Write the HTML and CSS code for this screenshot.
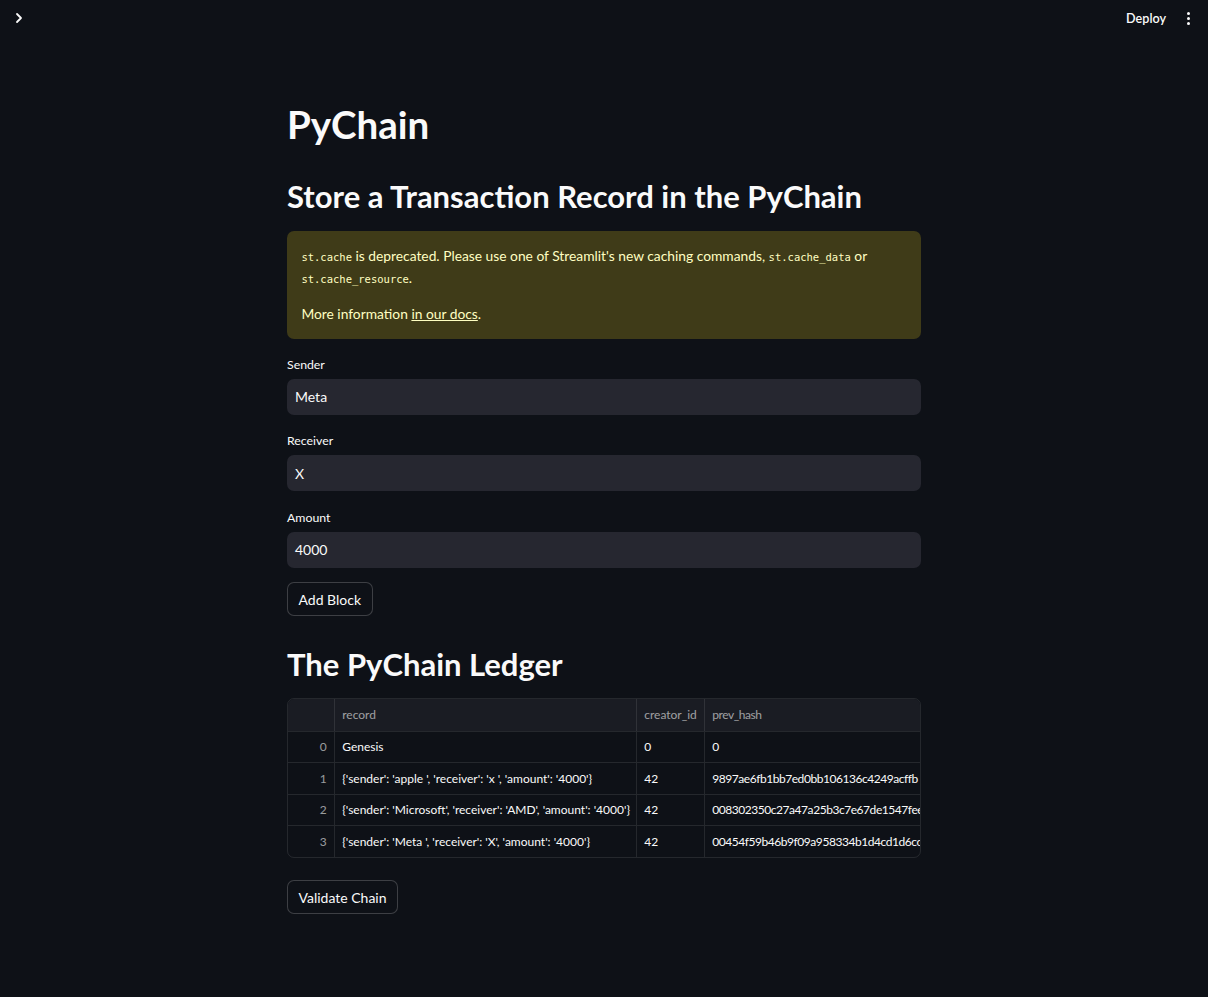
FILE: index.html
```html
<!DOCTYPE html>
<html lang="en">
<head>
<meta charset="utf-8">
<title>PyChain</title>
<link rel="stylesheet" href="styles.css">
</head>
<body>
<header class="topbar">
  <button class="sidebar-toggle" aria-label="Open sidebar">
    <svg width="10" height="12" viewBox="0 0 10 12"><path d="M3 2 L7 6 L3 10" fill="none" stroke="#fafafa" stroke-width="1.8" stroke-linecap="round" stroke-linejoin="round"/></svg>
  </button>
  <div class="toolbar">
    <span class="deploy">Deploy</span>
    <span class="kebab" aria-label="Main menu"><i></i><i></i><i></i></span>
  </div>
</header>
<main class="container">
  <h1 class="title">PyChain</h1>
  <h2 class="subtitle">Store a Transaction Record in the PyChain</h2>
  <div class="alert">
    <p><code>st.cache</code> is deprecated. Please use one of Streamlit's new caching commands, <code>st.cache_data</code> or <code>st.cache_resource</code>.</p>
    <p>More information <a href="#">in our docs</a>.</p>
  </div>
  <div class="field">
    <label class="field-label">Sender</label>
    <div class="input">Meta</div>
  </div>
  <div class="field">
    <label class="field-label">Receiver</label>
    <div class="input">X</div>
  </div>
  <div class="field">
    <label class="field-label">Amount</label>
    <div class="input">4000</div>
  </div>
  <div class="btn-row"><button class="btn">Add Block</button></div>
  <h2 class="subtitle ledger">The PyChain Ledger</h2>
  <div class="grid-wrap">
    <div class="grid">
      <div class="row head">
        <div class="cell idx"></div>
        <div class="cell rec">record</div>
        <div class="cell cid">creator_id</div>
        <div class="cell hash">prev_hash</div>
      </div>
      <div class="row">
        <div class="cell idx">0</div>
        <div class="cell rec">Genesis</div>
        <div class="cell cid">0</div>
        <div class="cell hash">0</div>
      </div>
      <div class="row">
        <div class="cell idx">1</div>
        <div class="cell rec">{'sender': 'apple ', 'receiver': 'x ', 'amount': '4000'}</div>
        <div class="cell cid">42</div>
        <div class="cell hash">9897ae6fb1bb7ed0bb106136c4249acffb</div>
      </div>
      <div class="row">
        <div class="cell idx">2</div>
        <div class="cell rec">{'sender': 'Microsoft', 'receiver': 'AMD', 'amount': '4000'}</div>
        <div class="cell cid">42</div>
        <div class="cell hash">008302350c27a47a25b3c7e67de1547fee</div>
      </div>
      <div class="row">
        <div class="cell idx">3</div>
        <div class="cell rec">{'sender': 'Meta ', 'receiver': 'X', 'amount': '4000'}</div>
        <div class="cell cid">42</div>
        <div class="cell hash">00454f59b46b9f09a958334b1d4cd1d6cc</div>
      </div>
    </div>
  </div>
  <div class="btn-row validate"><button class="btn">Validate Chain</button></div>
</main>
</body>
</html>
```

FILE: styles.css
```css
* { box-sizing: border-box; }
html, body {
  margin: 0;
  padding: 0;
  background: #0e1117;
  color: #fafafa;
  font-family: Lato, "Noto Sans", sans-serif;
}
body { min-height: 997px; }

.topbar {
  height: 36px;
  display: flex;
  align-items: center;
  justify-content: space-between;
  padding: 0 12px 0 10px;
}
.sidebar-toggle {
  background: none;
  border: none;
  padding: 0;
  width: 14px;
  height: 14px;
  display: flex;
  align-items: center;
  justify-content: center;
  margin-left: 2px;
}
.toolbar {
  display: flex;
  align-items: center;
}
.deploy {
  font-size: 12.6px;
  font-weight: 600;
  color: #fafafa;
  margin-right: 21px;
}
.kebab {
  display: flex;
  flex-direction: column;
  gap: 2px;
  margin-right: 6px;
}
.kebab i {
  display: block;
  width: 3px;
  height: 3px;
  border-radius: 50%;
  background: #fafafa;
}

.container {
  width: 634px;
  margin: 0 auto;
  padding-top: 47px;
  padding-bottom: 60px;
}

.title {
  margin: 0;
  padding: 18px 0 14.4px;
  font-size: 38.5px;
  line-height: 47.5px;
  font-weight: 700;
}
.subtitle {
  margin: 0;
  padding: 14.4px 0;
  font-size: 31px;
  line-height: 38.9px;
  font-weight: 700;
}
.ledger { margin-top: 14.4px; }

.alert {
  background: #3f3b18;
  color: #ffffc2;
  border-radius: 7px;
  padding: 14.4px;
  font-size: 13.8px;
  line-height: 21.6px;
}
.alert p { margin: 0; }
.alert p + p { margin-top: 14.4px; }
.alert code {
  font-family: "DejaVu Sans Mono", "Liberation Mono", monospace;
  font-size: 10.5px;
  line-height: 0;
}
.alert a { color: #ffffc2; text-decoration: underline; }

.field { margin-top: 15.2px; }
.field-label {
  display: flex;
  align-items: center;
  height: 21.6px;
  margin-bottom: 3.6px;
  font-size: 12.3px;
  color: #fafafa;
}
.input {
  height: 36px;
  background: #262730;
  border-radius: 7px;
  display: flex;
  align-items: center;
  padding-left: 8px;
  font-size: 14px;
  color: #fafafa;
}

.btn-row { margin-top: 14.4px; }
.btn {
  height: 34px;
  padding: 0 10.5px;
  background: #0e1117;
  border: 1px solid rgba(250, 250, 250, 0.2);
  border-radius: 7px;
  color: #fafafa;
  font-family: Lato, "Noto Sans", sans-serif;
  font-size: 14px;
}
.validate { margin-top: 22.5px; }

.grid-wrap {
  width: 634px;
  border: 1px solid rgba(250, 250, 250, 0.1);
  border-radius: 7px;
  overflow: hidden;
}
.grid { width: 632px; display: flex; flex-direction: column; }
.row {
  display: flex;
  height: 31.5px;
  border-top: 1px solid rgba(250, 250, 250, 0.1);
}
.row.head { border-top: none; background: #1a1c23; }
.cell {
  display: flex;
  align-items: center;
  font-size: 12px;
  padding: 0 7.2px;
  white-space: nowrap;
  overflow: hidden;
  border-left: 1px solid rgba(250, 250, 250, 0.1);
}
.cell.idx {
  width: 46px;
  flex: none;
  border-left: none;
  justify-content: flex-end;
  color: rgba(250, 250, 250, 0.6);
}
.cell.rec { width: 302px; flex: none; }
.cell.cid { width: 68px; flex: none; }
.cell.hash { flex: 1; min-width: 0; letter-spacing: -0.45px; padding-right: 0; }
.row.head .cell { color: rgba(250, 250, 250, 0.6); }
```
